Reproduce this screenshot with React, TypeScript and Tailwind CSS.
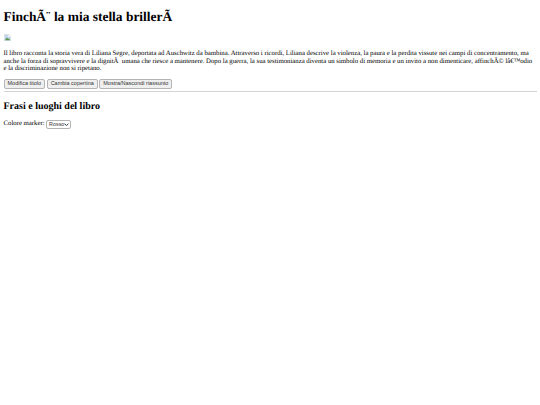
export default function App() {
  return (
    <div className="min-h-[405px] bg-white px-[3.5px] font-['Liberation_Serif',serif] text-[6.76px] leading-[7.6px] text-black [text-rendering:geometricPrecision]">
      <h1 className="pt-[9px] text-[13.45px] leading-[16px] font-bold">FinchÃ¨ la mia stella brillerÃ</h1>
      <div className="mt-[9px] h-[7px]">
        <svg width="7" height="7" viewBox="0 0 16 16">
          <path d="M1 1h10l4 4v10H1z" fill="#fff" stroke="#a9b8c8" />
          <path d="M2 2h8v4h4v8H2z" fill="#c4d6ee" />
          <path d="M2 14l4-6 4 3 2-1 2 4z" fill="#5c9a54" />
        </svg>
      </div>
      <p className="mt-[9px]">
        {"Il libro racconta la storia vera di Liliana Segre, deportata ad Auschwitz da bambina. Attraverso i ricordi, Liliana descrive la violenza, la paura e la perdita vissute nei campi di concentramento, ma anche la forza di sopravvivere e la dignitÃ\u00a0 umana che riesce a mantenere. Dopo la guerra, la sua testimonianza diventa un simbolo di memoria e un invito a non dimenticare, affinchÃ© lâ€™odio e la discriminazione non si ripetano."}
      </p>
      <div className="mt-[6px] flex gap-[1.5px]">
        <Btn label="Modifica titolo" />
        <Btn label="Cambia copertina" />
        <Btn label="Mostra/Nascondi riassunto" />
      </div>
      <hr className="mt-[2px] border-t border-[#d4d4d4]" />
      <h2 className="mt-[9px] text-[10px] leading-[12px] font-bold">Frasi e luoghi del libro</h2>
      <div className="mt-[7px] flex items-center gap-[1.5px]">
        <span>Colore marker:</span>
        <div className="relative h-[9px] w-[25px] rounded-[2px] border border-[#b4b4b4] bg-white">
          <select className="block h-full w-full appearance-none bg-transparent pl-[2px] font-['Liberation_Sans',sans-serif] text-[5.4px] leading-[7px] text-[#333]">
            <option>Rosso</option>
          </select>
          <svg className="absolute top-[2px] right-[1.5px]" width="5" height="3.5" viewBox="0 0 6 4" fill="none" stroke="#333" strokeWidth="1.2">
            <path d="M0.7 0.7L3 3L5.3 0.7" />
          </svg>
        </div>
      </div>
    </div>
  );
}

function Btn({ label }: { label: string }) {
  return (
    <button className="h-[10px] rounded-[2px] border border-[#b4b4b4] bg-[#efefef] px-[3px] font-['Liberation_Sans',sans-serif] text-[5.5px] leading-none text-[#333]">
      {label}
    </button>
  );
}
